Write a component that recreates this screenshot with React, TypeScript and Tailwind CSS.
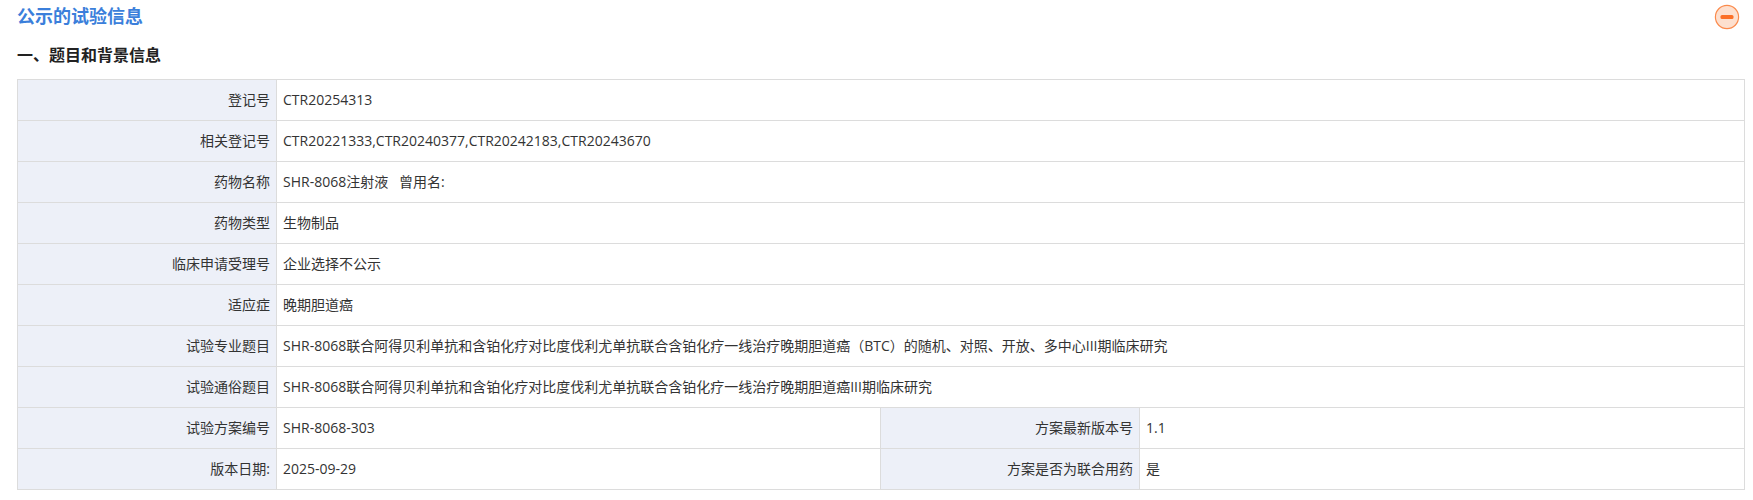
const FONT = "font-['Open_Sans','Noto_Sans_CJK_SC',sans-serif]"

const FULL_ROWS = [
  { label: '登记号', value: 'CTR20254313' },
  { label: '相关登记号', value: 'CTR20221333,CTR20240377,CTR20242183,CTR20243670' },
  { label: '药物名称', value: 'SHR-8068注射液\u00a0\u00a0\u00a0曾用名:' },
  { label: '药物类型', value: '生物制品' },
  { label: '临床申请受理号', value: '企业选择不公示' },
  { label: '适应症', value: '晚期胆道癌' },
  {
    label: '试验专业题目',
    value: 'SHR-8068联合阿得贝利单抗和含铂化疗对比度伐利尤单抗联合含铂化疗一线治疗晚期胆道癌（BTC）的随机、对照、开放、多中心III期临床研究',
  },
  { label: '试验通俗题目', value: 'SHR-8068联合阿得贝利单抗和含铂化疗对比度伐利尤单抗联合含铂化疗一线治疗晚期胆道癌III期临床研究' },
]

const SPLIT_ROWS = [
  { label: '试验方案编号', value: 'SHR-8068-303', label2: '方案最新版本号', value2: '1.1' },
  { label: '版本日期:', value: '2025-09-29', label2: '方案是否为联合用药', value2: '是' },
]

const labelCell = 'h-[41px] border border-[#dcdcdc] bg-[#edf0f8] p-0 pb-[2px] pr-[6px] text-right font-normal'
const valueCell = 'h-[41px] border border-[#dcdcdc] bg-white p-0 pb-[2px] pl-[6px] text-left'

export default function App() {
  return (
    <div className={`${FONT} h-[500px] overflow-hidden bg-white pl-[17px] pr-[8px] text-[14px] text-[#333]`}>
      {/* Header */}
      <div className="flex h-[33px] items-center justify-between">
        <h2 className="text-[18px] font-bold text-[#3b7fdb]">公示的试验信息</h2>
        <svg width="26" height="26" viewBox="0 0 26 26" className="mr-[5px]">
          <circle cx="13" cy="13" r="11.6" fill="#fde0cf" stroke="#fb8a4c" strokeWidth="1.2" />
          <rect x="6.5" y="11" width="13" height="4" rx="1.5" fill="#fb7028" />
        </svg>
      </div>

      <h3 className="mt-[10px] text-[16px] leading-[24px] font-bold text-[#222]">一、题目和背景信息</h3>

      <table className="mt-[12px] w-full table-fixed border-collapse">
        <colgroup>
          <col className="w-[259px]" />
          <col className="w-[604px]" />
          <col className="w-[259px]" />
          <col />
        </colgroup>
        <tbody>
          {FULL_ROWS.map((row) => (
            <tr key={row.label}>
              <th className={labelCell}>{row.label}</th>
              <td className={valueCell} colSpan={3}>{row.value}</td>
            </tr>
          ))}
          {SPLIT_ROWS.map((row) => (
            <tr key={row.label}>
              <th className={labelCell}>{row.label}</th>
              <td className={valueCell}>{row.value}</td>
              <th className={labelCell}>{row.label2}</th>
              <td className={valueCell}>{row.value2}</td>
            </tr>
          ))}
        </tbody>
      </table>
    </div>
  )
}
